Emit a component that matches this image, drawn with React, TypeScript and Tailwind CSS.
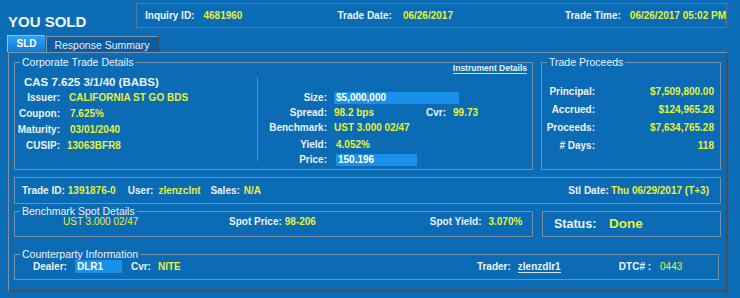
import React from 'react';

const LBL = 'font-bold text-[#eef3f8]';
const VAL = 'font-bold text-[#e3f23a]';

function Group({ title, className, children }: { title: string; className?: string; children?: React.ReactNode }) {
  return (
    <fieldset className={`border border-[#7791aa] ${className ?? ''}`}>
      <legend className="ml-[5px] px-[2px] text-[10.5px] leading-[10px] text-[#eef3f8]">{title}</legend>
      {children}
    </fieldset>
  );
}

export default function App() {
  const issue: [string, string, string][] = [
    ['Issuer:', 'CALIFORNIA ST GO BDS', 'ml-[9px]'],
    ['Coupon:', '7.625%', 'ml-[10px]'],
    ['Maturity:', '03/01/2040', 'ml-[10px]'],
    ['CUSIP:', '13063BFR8', 'ml-[7px]'],
  ];
  const proceeds: [string, string][] = [
    ['Principal:', '$7,509,800.00'],
    ['Accrued:', '$124,965.28'],
    ['Proceeds:', '$7,634,765.28'],
    ['# Days:', '118'],
  ];

  return (
    <div className="w-[740px] h-[298px] overflow-hidden bg-[#0b6bb5] pt-[3px] font-['Liberation_Sans',Arial,sans-serif] text-[10px] leading-[12px]">
      {/* Header */}
      <div className="flex items-start">
        <div className="w-[136px] pl-[8px] pt-[11px] text-[15px] leading-[16px] font-bold text-[#f4f7fa]">YOU SOLD</div>
        <div className="flex h-[25px] w-[591px] items-center border border-[#58799a] pl-[8px]">
          <span className={LBL}>Inquiry ID:</span>
          <span className={`${VAL} ml-[9px] w-[134px]`}>4681960</span>
          <span className={LBL}>Trade Date:</span>
          <span className={`${VAL} ml-[11px] w-[162px]`}>06/26/2017</span>
          <span className={LBL}>Trade Time:</span>
          <span className={`${VAL} ml-[9px]`}>06/26/2017 05:02 PM</span>
        </div>
      </div>

      {/* Tabs */}
      <div className="mt-[5px] flex items-end pl-[7px]">
        <div className="flex h-[17px] w-[38px] items-center justify-center border-t border-l border-[#8fc4ee] bg-gradient-to-b from-[#2fa0f3] to-[#0a7bd6] text-[10px] font-bold text-white">
          SLD
        </div>
        <div className="ml-px flex h-[16px] w-[113px] items-center justify-center border-t border-l border-[#7e95aa] border-r-2 border-r-[#3d4c5c] bg-[#0c5c9f] text-[10.5px] text-[#e9eff5]">
          Response Summary
        </div>
      </div>

      {/* Main panel */}
      <div className="ml-[8px] h-[240px] w-[720px] border-t border-l border-[#7d93a8] border-r-2 border-b-2 border-r-[#46505b] border-b-[#46505b] pl-[5px] pt-[4px]">
        <div className="flex">
          <Group title="Corporate Trade Details" className="h-[113px] w-[519px]">
            <div className="flex items-start">
              <div className="w-[242px] pt-[7px]">
                <div className="h-[16px] pl-[9px] text-[11.5px] leading-[16px] font-bold text-[#eef3f8]">CAS 7.625 3/1/40 (BABS)</div>
                {issue.map(([k, v, m]) => (
                  <div key={k} className="flex h-[16px] items-center">
                    <span className={`${LBL} w-[45px] text-right`}>{k}</span>
                    <span className={`${VAL} ${m}`}>{v}</span>
                  </div>
                ))}
              </div>
              <div className="mt-[10px] h-[84px] w-px bg-[#6f8ba5]" />
              <div className="flex-1">
                <div className="-mt-[3px] flex h-[10px] justify-end pr-[5px]">
                  <span className="border-b border-[#d6e4f2] text-[8.5px] leading-[9px] font-bold text-[#eef3f8]">Instrument Details</span>
                </div>
                <div className="mt-[17px] flex h-[14px] items-center">
                  <span className={`${LBL} w-[69px] text-right`}>Size:</span>
                  <span className="ml-[7px] h-[12px] w-[125px] bg-[#1990ea] pl-[2px] font-bold leading-[12px] text-white">$5,000,000</span>
                </div>
                <div className="flex h-[15px] items-center">
                  <span className={`${LBL} w-[69px] text-right`}>Spread:</span>
                  <span className={`${VAL} ml-[7px] w-[92px]`}>98.2 bps</span>
                  <span className={LBL}>Cvr:</span>
                  <span className={`${VAL} ml-[7px]`}>99.73</span>
                </div>
                <div className="flex h-[16px] items-center">
                  <span className={`${LBL} w-[69px] text-right`}>Benchmark:</span>
                  <span className={`${VAL} ml-[7px]`}>UST 3.000 02/47</span>
                </div>
                <div className="flex h-[17px] items-center">
                  <span className={`${LBL} w-[69px] text-right`}>Yield:</span>
                  <span className={`${VAL} ml-[9px]`}>4.052%</span>
                </div>
                <div className="flex h-[13px] items-center">
                  <span className={`${LBL} w-[69px] text-right`}>Price:</span>
                  <span className="ml-[9px] h-[12px] w-[81px] bg-[#1990ea] pl-[2px] font-bold leading-[12px] text-white">150.196</span>
                </div>
              </div>
            </div>
          </Group>

          <Group title="Trade Proceeds" className="ml-[8px] h-[113px] w-[180px]">
            <div className="pt-[16px]">
              {proceeds.map(([k, v]) => (
                <div key={k} className="flex h-[18px] items-center">
                  <span className={`${LBL} w-[53px] text-right`}>{k}</span>
                  <span className={`${VAL} flex-1 pr-[6px] text-right`}>{v}</span>
                </div>
              ))}
            </div>
          </Group>
        </div>

        {/* Trade ID row */}
        <div className="mt-[7px] flex h-[27px] w-[707px] items-center border border-[#7791aa] pl-[7px] pr-[11px]">
          <span className={LBL}>Trade ID:</span>
          <span className={`${VAL} ml-[3px] w-[60px]`}>1391876-0</span>
          <span className={LBL}>User:</span>
          <span className={`${VAL} ml-[5px] w-[52px]`}>zlenzclnt</span>
          <span className={LBL}>Sales:</span>
          <span className={`${VAL} ml-[4px] flex-1`}>N/A</span>
          <span className={LBL}>Stl Date:</span>
          <span className={`${VAL} ml-[2px]`}>Thu 06/29/2017 (T+3)</span>
        </div>

        {/* Benchmark spot + status */}
        <div className="mt-[2px] flex items-end">
          <Group title="Benchmark Spot Details" className="h-[31px] w-[519px]">
            <div className="flex h-[12px] items-center pl-[48px]">
              <span className="w-[166px] text-[#e3f23a]">UST 3.000 02/47</span>
              <span className={LBL}>Spot Price:</span>
              <span className={`${VAL} ml-[3px] w-[145px]`}>98-206</span>
              <span className={LBL}>Spot Yield:</span>
              <span className={`${VAL} ml-[7px]`}>3.070%</span>
            </div>
          </Group>
          <div className="ml-[9px] flex h-[26px] w-[179px] items-center border border-[#7791aa] pl-[11px]">
            <span className="w-[55px] text-[12.5px] font-bold text-[#eef3f8]">Status:</span>
            <span className="text-[13.5px] leading-[16px] font-bold text-[#e3f23a]">Done</span>
          </div>
        </div>

        {/* Counterparty */}
        <Group title="Counterparty Information" className="mt-[12px] h-[31px] w-[705px]">
          <div className="flex h-[15px] items-center pl-[18px]">
            <span className={LBL}>Dealer:</span>
            <span className="ml-[8px] h-[13px] w-[47px] bg-[#1990ea] pl-[2px] font-bold leading-[13px] text-white">DLR1</span>
            <span className={`${LBL} ml-[9px]`}>Cvr:</span>
            <span className={`${VAL} ml-[7px] w-[319px]`}>NITE</span>
            <span className={LBL}>Trader:</span>
            <span className="ml-[7px] w-[101px]">
              <span className="border-b-[1.5px] border-[#d6e4f2] font-bold leading-[11px] text-[#eef3f8]">zlenzdlr1</span>
            </span>
            <span className={LBL}>DTC# :</span>
            <span className="ml-[9px] text-[#e3f23a]">0443</span>
          </div>
        </Group>
      </div>
    </div>
  );
}
